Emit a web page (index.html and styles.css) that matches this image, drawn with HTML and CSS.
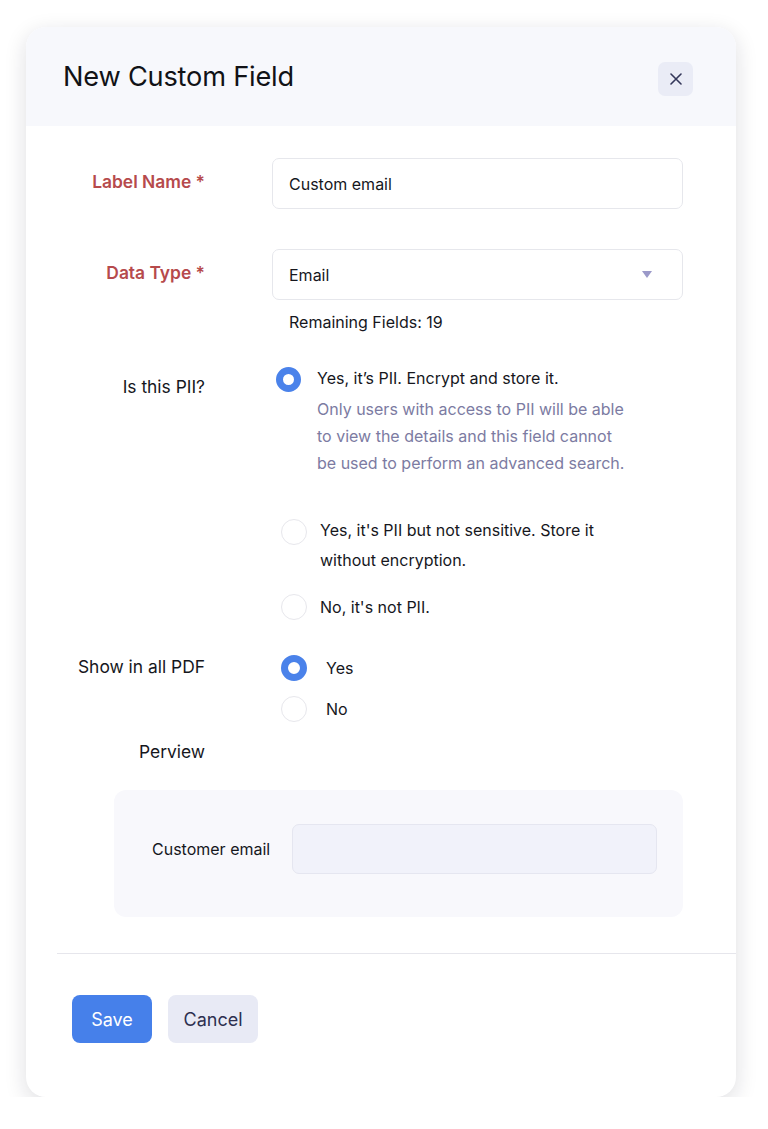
FILE: index.html
```html
<!DOCTYPE html>
<html lang="en">
<head>
    <meta charset="UTF-8">
    <meta name="viewport" content="width=device-width, initial-scale=1.0">
    <title>New Custom Field</title>
    <link rel="stylesheet" href="styles.css">
</head>
<body>
    <div class="modal">
        <div class="modal-header">
            <h1 class="modal-title">New Custom Field</h1>
            <button class="close-btn" aria-label="Close">
                <svg width="12" height="12" viewBox="0 0 12 12">
                    <path d="M1 1 L11 11 M11 1 L1 11" stroke="#34375a" stroke-width="1.6" stroke-linecap="round" fill="none"/>
                </svg>
            </button>
        </div>

        <div class="modal-body">
            <div class="form-row row-input">
                <label class="field-label required">Label Name *</label>
                <div class="field">
                    <input class="text-input" type="text" value="Custom email">
                </div>
            </div>

            <div class="form-row row-input row-type">
                <label class="field-label required">Data Type *</label>
                <div class="field">
                    <div class="select-box">
                        <span>Email</span>
                        <span class="caret"></span>
                    </div>
                    <div class="remaining">Remaining Fields: 19</div>
                </div>
            </div>

            <div class="form-row row-pii">
                <label class="field-label">Is this PII?</label>
                <div class="field">
                    <div class="option option-main">
                        <span class="radio checked"></span>
                        <div class="option-text">
                            <div class="option-title">Yes, it’s PII. Encrypt and store it.</div>
                            <div class="option-desc">Only users with access to PII will be able to view the details and this field cannot be used to perform an advanced search.</div>
                        </div>
                    </div>
                    <div class="option option-sub">
                        <span class="radio"></span>
                        <div class="option-text">Yes, it's PII but not sensitive. Store it without encryption.</div>
                    </div>
                    <div class="option option-sub option-last">
                        <span class="radio"></span>
                        <div class="option-text">No, it's not PII.</div>
                    </div>
                </div>
            </div>

            <div class="form-row row-pdf">
                <label class="field-label">Show in all PDF</label>
                <div class="field">
                    <div class="option option-yn">
                        <span class="radio checked"></span>
                        <div class="option-text">Yes</div>
                    </div>
                    <div class="option option-yn option-no">
                        <span class="radio"></span>
                        <div class="option-text">No</div>
                    </div>
                </div>
            </div>

            <div class="form-row row-preview">
                <label class="field-label">Perview</label>
            </div>

            <div class="preview-box">
                <span class="preview-label">Customer email</span>
                <div class="preview-input"></div>
            </div>
        </div>

        <div class="modal-footer">
            <button class="btn btn-primary">Save</button>
            <button class="btn btn-secondary">Cancel</button>
        </div>
    </div>
</body>
</html>
```

FILE: styles.css
```css
body {
    margin: 0;
    background: #fff;
    font-family: Inter, "Noto Sans", sans-serif;
    color: #16171d;
}

.modal {
    width: 710px;
    height: 1070px;
    margin: 27px 0 0 26px;
    background: #fff;
    border-radius: 20px;
    box-shadow: 0 6px 22px rgba(20, 20, 40, 0.14);
    overflow: hidden;
    display: flex;
    flex-direction: column;
}

/* Header */
.modal-header {
    height: 99px;
    background: #f7f8fc;
    display: flex;
    align-items: center;
    justify-content: space-between;
    padding: 0 43px 0 37px;
}

.modal-title {
    margin: 0;
    font-size: 27.2px;
    font-weight: 400;
    color: #111216;
    letter-spacing: -0.2px;
}

.close-btn {
    width: 35px;
    height: 34px;
    margin-top: 5px;
    border: none;
    border-radius: 7px;
    background: #eaecf6;
    display: flex;
    align-items: center;
    justify-content: center;
    padding: 0;
}

/* Body */
.modal-body {
    padding-top: 32px;
    flex: 1;
}

.form-row {
    display: grid;
    grid-template-columns: 179px 411px;
    column-gap: 67px;
    align-items: start;
}

.field-label {
    text-align: right;
    font-size: 17.4px;
    line-height: 24px;
    color: #16171d;
}

.field-label.required {
    color: #b64a4c;
    font-weight: 600;
}

.row-input .field-label {
    padding-top: 12px;
}

.row-type {
    margin-top: 40px;
}

.text-input,
.select-box {
    box-sizing: border-box;
    width: 100%;
    height: 51px;
    border: 1.5px solid #e6e7ec;
    border-radius: 7px;
    padding: 0 16px;
    font-family: inherit;
    font-size: 16px;
    color: #16171d;
    background: #fff;
    outline: none;
}

.select-box {
    display: flex;
    align-items: center;
    justify-content: space-between;
    padding-right: 30px;
}

.caret {
    width: 0;
    height: 0;
    border-left: 5px solid transparent;
    border-right: 5px solid transparent;
    border-top: 7px solid #9b99c9;
}

.remaining {
    margin-top: 10px;
    padding-left: 17px;
    font-size: 16px;
    line-height: 24px;
}

/* Radio options */
.row-pii {
    margin-top: 31px;
}

.row-pii .field-label {
    padding-top: 10px;
}

.option {
    display: flex;
    align-items: flex-start;
    font-size: 16px;
}

.radio {
    flex: none;
    box-sizing: border-box;
    width: 26px;
    height: 26px;
    border-radius: 50%;
    border: 1.5px solid #e7e7ec;
    background: #fff;
}

.radio.checked {
    border: 7.5px solid #4a82ea;
}

.option-main .radio {
    width: 25px;
    height: 25px;
    margin: 2px 16px 0 4px;
}

.option-main .option-title {
    line-height: 27px;
}

.option-desc {
    width: 315px;
    margin-top: 4px;
    line-height: 27px;
    color: #7c7ba2;
}

.option-sub {
    margin-top: 38px;
}

.option-sub .radio {
    margin: 4px 13px 0 9px;
}

.option-sub .option-text {
    width: 300px;
    line-height: 30px;
}

.option-last {
    margin-top: 17px;
}

.option-last .radio {
    margin-top: 2px;
}

.row-pdf {
    margin-top: 31px;
}

.row-pdf .field-label {
    padding-top: 2px;
}

.option-yn {
    line-height: 30px;
}

.option-yn .radio {
    margin: 2px 19px 0 9px;
}

.option-no {
    margin-top: 11px;
}

.row-preview {
    margin-top: 16px;
}

/* Preview */
.preview-box {
    box-sizing: border-box;
    width: 569px;
    height: 127px;
    margin: 26px 0 0 88px;
    padding: 34px 26px 0 38px;
    background: #f8f8fc;
    border-radius: 12px;
    display: flex;
    align-items: flex-start;
    gap: 22px;
}

.preview-label {
    font-size: 16px;
    line-height: 50px;
    white-space: nowrap;
}

.preview-input {
    flex: 1;
    height: 50px;
    box-sizing: border-box;
    background: #f1f2fa;
    border: 1.5px solid #e5e6f0;
    border-radius: 7px;
}

/* Footer */
.modal-footer {
    margin-left: 31px;
    border-top: 1.5px solid #e6e6ec;
    padding: 41px 0 54px 15px;
    display: flex;
    gap: 16px;
}

.btn {
    height: 48px;
    border: none;
    border-radius: 8px;
    font-family: inherit;
    font-size: 18px;
    padding: 0;
}

.btn-primary {
    width: 80px;
    background: #4680ea;
    color: #fff;
}

.btn-secondary {
    width: 90px;
    background: #e8eaf5;
    color: #2d3050;
}
```
